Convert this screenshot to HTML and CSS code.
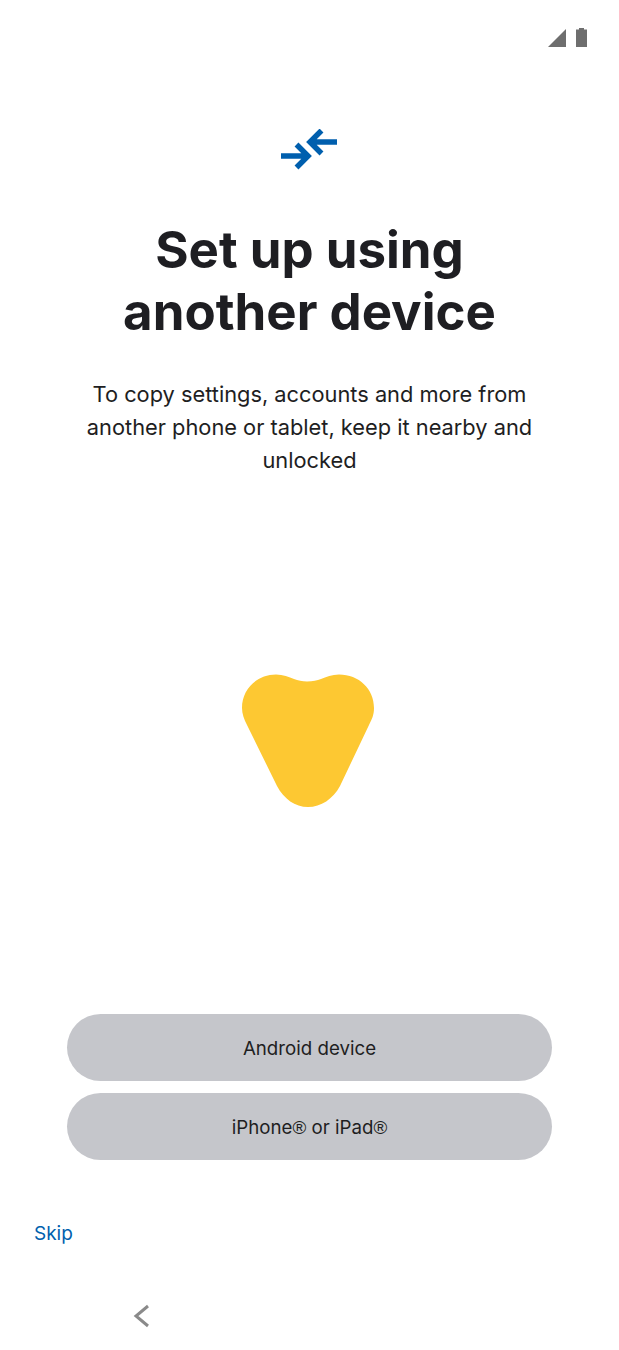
FILE: index.html
```html
<!DOCTYPE html>
<html lang="en">
<head>
    <meta charset="UTF-8">
    <title>Set up using another device</title>
    <link rel="stylesheet" href="styles.css">
</head>
<body>
    <div class="screen">
        <div class="status-bar">
            <svg class="signal" width="18" height="18" viewBox="0 0 18 18"><path d="M18 0V18H0Z"/></svg>
            <svg class="battery" width="11" height="19" viewBox="0 0 11 19"><path d="M3 0H8V1.500H11V19H0V1.500H3Z"/></svg>
        </div>
        <div class="logo">
            <svg width="58" height="44" viewBox="0 0 58 44">
                <path d="M0 27H27M15.500 15.500L27 27L15.500 38.500M56 13H29M40.500 1.500L29 13L40.500 24.500"/>
            </svg>
        </div>
        <h1 class="title">Set up using<br>another device</h1>
        <p class="intro">To copy settings, accounts and more from another phone or tablet, keep it nearby and unlocked</p>
        <div class="art">
            <svg width="132" height="133" viewBox="0 0 132 133">
                <path d="M65 7.500C71 7.500 75 6.500 79 5C84 3 90 .5 97 .5C117 .5 132 15 132 34C132 41 130 45 127 51L98 112C91 125 79 133 66 133C53 133 42 125 35 112L5 51C2 45 0 40 0 34C0 15 15 .5 34 .5C41 .5 47 3 52 5C56 6.500 60 7.500 65 7.500Z"/>
            </svg>
        </div>
        <div class="choices">
            <button class="choice">Android device</button>
            <button class="choice">iPhone<span class="reg">®</span> or iPad<span class="reg">®</span></button>
        </div>
        <a class="skip">Skip</a>
        <div class="nav-bar">
            <svg width="18" height="24" viewBox="0 0 18 24"><path d="M15 2L3 12L15 22"/></svg>
        </div>
    </div>
</body>
</html>
```

FILE: styles.css
```css
body {
    margin: 0;
    background: #fff;
    font-family: Inter, "Open Sans", "Liberation Sans", sans-serif;
    color: #1e1e22;
}
.screen {
    width: 619px;
    height: 1350px;
    display: flex;
    flex-direction: column;
    overflow: hidden;
}
.status-bar {
    display: flex;
    justify-content: flex-end;
    align-items: flex-end;
    gap: 10px;
    height: 47px;
    padding-right: 32px;
    box-sizing: border-box;
}
.status-bar svg {
    fill: #6e6e6e;
}
.logo {
    display: flex;
    justify-content: center;
    margin-top: 82px;
    padding-left: 1px;
}
.logo svg {
    fill: none;
    stroke: #005fae;
    stroke-width: 5.5;
}
.title {
    margin: 46px 0 0;
    text-align: center;
    font-size: 51px;
    line-height: 62px;
    font-weight: 700;
}
.intro {
    margin: 35px 78px 0;
    text-align: center;
    font-size: 21.8px;
    line-height: 33px;
}
.art {
    display: flex;
    justify-content: center;
    margin-top: 197px;
    margin-left: -3px;
}
.art svg {
    fill: #fdc832;
    display: block;
}
.choices {
    display: flex;
    flex-direction: column;
    gap: 12px;
    margin: 207px 67px 0;
}
.choice {
    height: 67px;
    padding: 2px 0 0;
    border: none;
    border-radius: 34px;
    background: #c5c6cb;
    color: #1e1e22;
    font-family: inherit;
    font-size: 18.7px;
}
.reg {
    font-family: "Liberation Sans", sans-serif;
}
.skip {
    margin: 61px 0 0 34px;
    color: #005fae;
    font-size: 19px;
    line-height: 26px;
}
.nav-bar {
    margin: 57px 0 0 133px;
}
.nav-bar svg {
    display: block;
    fill: none;
    stroke: #8a8a8a;
    stroke-width: 3;
}
```
